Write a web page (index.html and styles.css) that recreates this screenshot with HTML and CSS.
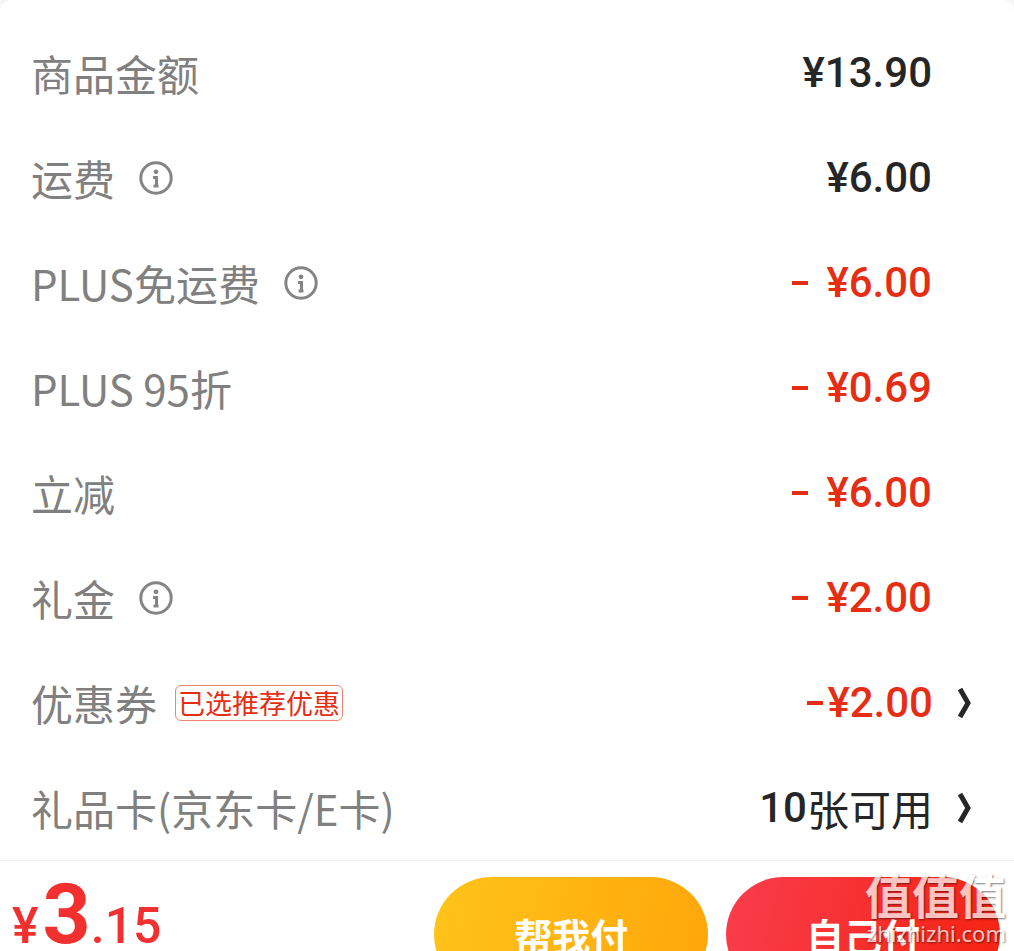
FILE: index.html
```
<!DOCTYPE html>
<html lang="zh-CN">
<head>
    <meta charset="UTF-8">
    <meta name="viewport" content="width=device-width, initial-scale=1.0">
    <title>确认订单</title>
    <link rel="stylesheet" href="styles.css">
</head>
<body>
    <div class="page">
        <main class="card">
            <ul class="fee-list">
                <li class="row">
                    <span class="label">商品金额</span>
                    <span class="amount">¥13.90</span>
                </li>
                <li class="row">
                    <span class="label">运费</span>
                    <button class="info" aria-label="运费说明">
                        <svg viewBox="0 0 34 34"><circle cx="17" cy="17" r="15.2"/><circle class="dot" cx="17" cy="10.8" r="2.4"/><path d="M14 16.5h3.5v8.5M14.5 25h5"/></svg>
                    </button>
                    <span class="amount">¥6.00</span>
                </li>
                <li class="row">
                    <span class="label">PLUS免运费</span>
                    <button class="info" aria-label="PLUS免运费说明">
                        <svg viewBox="0 0 34 34"><circle cx="17" cy="17" r="15.2"/><circle class="dot" cx="17" cy="10.8" r="2.4"/><path d="M14 16.5h3.5v8.5M14.5 25h5"/></svg>
                    </button>
                    <span class="amount discount"><span class="minus"></span>¥6.00</span>
                </li>
                <li class="row">
                    <span class="label">PLUS 95折</span>
                    <span class="amount discount"><span class="minus"></span>¥0.69</span>
                </li>
                <li class="row">
                    <span class="label">立减</span>
                    <span class="amount discount"><span class="minus"></span>¥6.00</span>
                </li>
                <li class="row">
                    <span class="label">礼金</span>
                    <button class="info" aria-label="礼金说明">
                        <svg viewBox="0 0 34 34"><circle cx="17" cy="17" r="15.2"/><circle class="dot" cx="17" cy="10.8" r="2.4"/><path d="M14 16.5h3.5v8.5M14.5 25h5"/></svg>
                    </button>
                    <span class="amount discount"><span class="minus"></span>¥2.00</span>
                </li>
                <li class="row">
                    <span class="label">优惠券</span>
                    <span class="tag">已选推荐优惠</span>
                    <a class="amount discount link" href="#coupon">
                        <span class="value"><span class="minus tight"></span>¥2.00</span>
                        <svg class="arrow" viewBox="0 0 14 30"><path d="M3 1l8 14-8 14"/></svg>
                    </a>
                </li>
                <li class="row">
                    <span class="label">礼品卡(京东卡/E卡)</span>
                    <a class="amount link" href="#giftcard">
                        <span class="value">10<span class="unit">张可用</span></span>
                        <svg class="arrow" viewBox="0 0 14 30"><path d="M3 1l8 14-8 14"/></svg>
                    </a>
                </li>
            </ul>
        </main>

        <footer class="pay-bar">
            <div class="total">¥<span class="total-int">3</span>.15</div>
            <button class="btn btn-friend">帮我付</button>
            <button class="btn btn-self">自己付</button>
        </footer>

        <div class="watermark">
            <div class="watermark-name">值值值</div>
            <div class="watermark-url">zhizhizhi.com</div>
        </div>
    </div>
</body>
</html>
```
FILE: styles.css
```
:root {
    --label-color: #808080;
    --text-color: #262626;
    --discount-color: #e62e14;
    --total-color: #f23030;
    --line-color: #f3f3f3;
}

* {
    margin: 0;
    padding: 0;
    box-sizing: border-box;
}

body {
    font-family: "Noto Sans CJK SC", sans-serif;
    color: var(--text-color);
    background-color: #f5f5f5;
}

button {
    border: none;
    background: none;
    font-family: inherit;
    cursor: pointer;
}

.page {
    position: relative;
    height: 100vh;
    overflow: hidden;
}

.card {
    background-color: #fff;
    border-radius: 12px 12px 0 0;
    padding: 20px 43px 0 31px;
}

.fee-list {
    list-style: none;
}

.row {
    display: flex;
    align-items: center;
    height: 105px;
}

.label {
    font-size: 42px;
    color: var(--label-color);
}

.info {
    width: 34px;
    height: 34px;
    margin-left: 24px;
}

.info svg {
    display: block;
    fill: none;
    stroke: #858585;
    stroke-width: 3;
}

.info .dot {
    fill: #858585;
    stroke: none;
}

.amount {
    display: flex;
    align-items: center;
    margin-left: auto;
    margin-right: 39px;
    font-family: Roboto, "Noto Sans CJK SC", sans-serif;
    font-size: 42px;
    font-weight: 500;
}

.discount {
    color: var(--discount-color);
}

.minus {
    width: 16px;
    height: 4px;
    margin-right: 18px;
    background-color: currentColor;
}

.minus.tight {
    margin-right: 4px;
}

.link {
    gap: 24px;
    margin-right: 0;
    text-decoration: none;
}

a.link:not(.discount) {
    color: var(--text-color);
}

.value {
    display: flex;
    align-items: center;
}

.unit {
    font-weight: 400;
}

.arrow {
    width: 14px;
    height: 30px;
    fill: none;
    stroke: var(--text-color);
    stroke-width: 5;
}

.tag {
    margin-left: 18px;
    padding: 0 2px;
    border: 1px solid #ee8373;
    border-radius: 6px;
    font-size: 27px;
    line-height: 34px;
    color: var(--discount-color);
}

.pay-bar {
    display: flex;
    align-items: flex-start;
    gap: 18px;
    padding: 16px 14px 16px 12px;
    border-top: 1px solid var(--line-color);
    background-color: #fff;
}

.total {
    margin-right: auto;
    font-family: Roboto, sans-serif;
    font-size: 50px;
    font-weight: 500;
    line-height: 76px;
    color: var(--total-color);
}

.total-int {
    margin-left: 4px;
    font-size: 84px;
    font-weight: 700;
}

.btn {
    flex: none;
    width: 27vw;
    height: 115px;
    border-radius: 58px;
    font-size: 38px;
    font-weight: 700;
    color: #fff;
}

.btn-friend {
    background: linear-gradient(105deg, #ffc41a, #ffa50a);
}

.btn-self {
    background: linear-gradient(105deg, #f93d4d, #f5220f);
}

/* site mark over the bottom right corner */
.watermark {
    position: absolute;
    right: 8px;
    bottom: 4px;
    text-align: right;
    color: #fff;
    text-shadow: 1px 1px 2px rgba(0, 0, 0, 0.7);
    opacity: 0.72;
    pointer-events: none;
}

.watermark-name {
    font-size: 47px;
    font-weight: 700;
    line-height: 50px;
}

.watermark-url {
    font-family: "Noto Sans", sans-serif;
    font-size: 22px;
    line-height: 28px;
}
```
